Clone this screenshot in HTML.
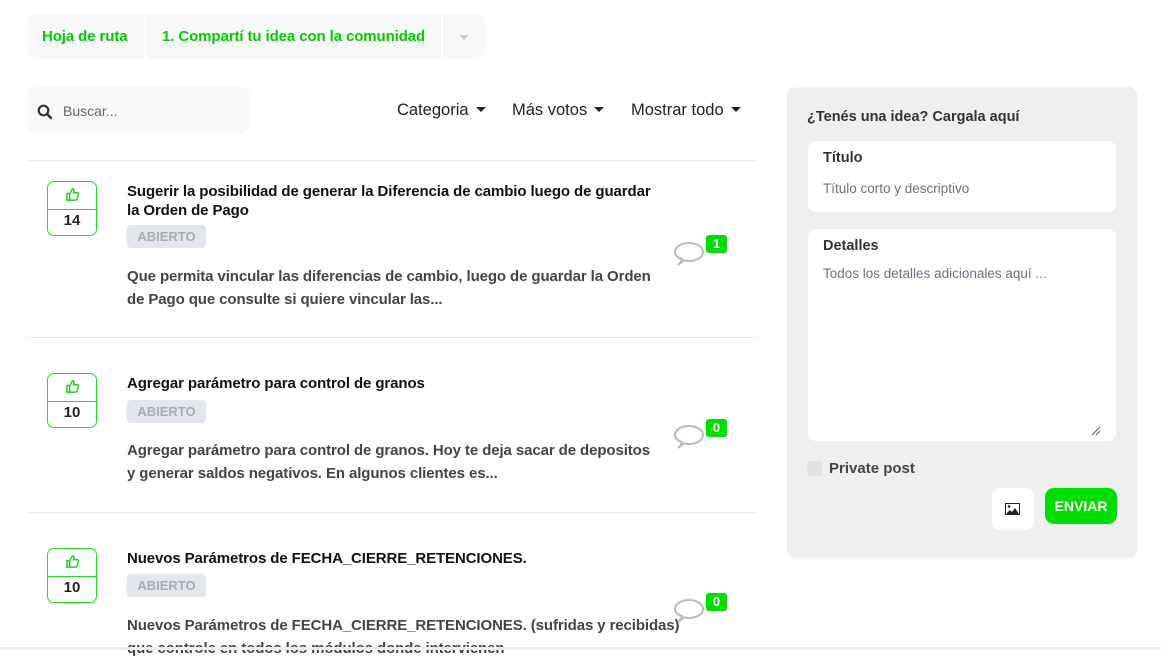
<!DOCTYPE html>
<html><head><meta charset="utf-8"><style>
*{box-sizing:border-box;margin:0;padding:0}
body{width:1161px;height:650px;overflow:hidden;background:#fff;font-family:"Liberation Sans",sans-serif;font-weight:bold;position:relative;color:#111}
.a{position:absolute;white-space:nowrap}
.tab{position:absolute;top:14px;height:45px;background:#f8f8f8;color:#0c0;font-size:15px;line-height:45px;letter-spacing:-0.1px}
.sep{position:absolute;left:27px;width:730px;height:1px;background:#e8e8e8}
.vote{position:absolute;left:47px;width:50px;height:55px;border:1px solid #2d2;border-radius:7px}
.vote .d{position:absolute;top:27px;left:0;right:0;height:1px;background:#2d2}
.vote .n{position:absolute;top:30px;width:100%;text-align:center;font-size:15px;color:#222}
.title{font-size:15px;letter-spacing:-0.1px;line-height:19px;color:#111}
.badge{position:absolute;left:127px;width:79px;height:23px;background:#e3e6ea;border-radius:4px;color:#a9adb2;font-size:13px;text-align:center;line-height:23px}
.desc{font-size:15px;letter-spacing:-0.1px;line-height:23px;color:#444}
.cnt{position:absolute;left:706px;width:21px;height:18px;background:#0d0;border-radius:3px;color:#fff;font-size:13px;text-align:center;line-height:18px}
.menu{font-size:16.5px;font-weight:normal;color:#222}
.caret{display:inline-block;width:0;height:0;border-left:5px solid transparent;border-right:5px solid transparent;border-top:5px solid #222;vertical-align:middle;margin-left:7px;margin-top:-3px}
</style></head><body>
<div class="tab" style="left:27px;width:117px;border-radius:10px 0 0 10px;padding-left:15px">Hoja de ruta</div>
<div class="tab" style="left:146px;width:295px;padding-left:16px">1. Compartí tu idea con la comunidad</div>
<div class="tab" style="left:443px;width:43px;border-radius:0 10px 10px 0"><span style="position:absolute;left:16px;top:21px;border-left:5px solid transparent;border-right:5px solid transparent;border-top:5px solid #ccc"></span></div>

<div class="a" style="left:27px;top:87px;width:223px;height:46px;background:#f8f8f8;border-radius:10px"></div>
<svg class="a" style="left:37px;top:104px" width="16" height="16" viewBox="0 0 16 16"><circle cx="6.5" cy="6.5" r="4.8" fill="none" stroke="#333" stroke-width="2.2"/><path d="M10 10l4 4" stroke="#333" stroke-width="2.6" stroke-linecap="round"/></svg>
<div class="a" style="left:63px;top:103px;font-size:14px;font-weight:normal;color:#666">Buscar...</div>
<div class="a menu" style="left:397px;top:101px">Categoria<span class="caret"></span></div>
<div class="a menu" style="left:512px;top:101px">Más votos<span class="caret"></span></div>
<div class="a menu" style="left:631px;top:101px">Mostrar todo<span class="caret"></span></div>

<div class="sep" style="top:160px"></div>
<div class="sep" style="top:337px"></div>
<div class="sep" style="top:512px"></div>

<div class="vote" style="top:181px"><svg class="a" style="left:17px;top:5px" width="15" height="15" viewBox="0 0 16 16"><path d="M2 7h3v7H2zM5 7l3-5c1.5 0 2 1 1.5 2.5L9 6h4c1 0 1.5 1 1.2 2l-1.5 5c-.3.7-.8 1-1.5 1H5" fill="none" stroke="#2c2" stroke-width="1.5"/></svg><div class="d"></div><div class="n">14</div></div>
<div class="a title" style="left:127px;top:182px">Sugerir la posibilidad de generar la Diferencia de cambio luego de guardar<br>la Orden de Pago</div>
<div class="badge" style="top:225px">ABIERTO</div>
<div class="a desc" style="left:127px;top:265px">Que permita vincular las diferencias de cambio, luego de guardar la Orden<br>de Pago que consulte si quiere vincular las...</div>
<svg class="a" style="left:673px;top:240px" width="32" height="28" viewBox="0 0 32 28"><path d="M9 19C4 17.5 2 15 2 12 2 7 8 3 16 3s14 4 14 9-6 9-14 9c-2 0-3.5-.2-5-.6L5 25c2-2 3.5-4 4-6z" fill="none" stroke="#b5bcc5" stroke-width="2"/></svg>
<div class="cnt" style="top:235px">1</div>

<div class="vote" style="top:373px"><svg class="a" style="left:17px;top:5px" width="15" height="15" viewBox="0 0 16 16"><path d="M2 7h3v7H2zM5 7l3-5c1.5 0 2 1 1.5 2.5L9 6h4c1 0 1.5 1 1.2 2l-1.5 5c-.3.7-.8 1-1.5 1H5" fill="none" stroke="#2c2" stroke-width="1.5"/></svg><div class="d"></div><div class="n">10</div></div>
<div class="a title" style="left:127px;top:374px">Agregar parámetro para control de granos</div>
<div class="badge" style="top:400px">ABIERTO</div>
<div class="a desc" style="left:127px;top:439px">Agregar parámetro para control de granos. Hoy te deja sacar de depositos<br>y generar saldos negativos. En algunos clientes es...</div>
<svg class="a" style="left:673px;top:423px" width="32" height="28" viewBox="0 0 32 28"><path d="M9 19C4 17.5 2 15 2 12 2 7 8 3 16 3s14 4 14 9-6 9-14 9c-2 0-3.5-.2-5-.6L5 25c2-2 3.5-4 4-6z" fill="none" stroke="#b5bcc5" stroke-width="2"/></svg>
<div class="cnt" style="top:419px">0</div>

<div class="vote" style="top:548px"><svg class="a" style="left:17px;top:5px" width="15" height="15" viewBox="0 0 16 16"><path d="M2 7h3v7H2zM5 7l3-5c1.5 0 2 1 1.5 2.5L9 6h4c1 0 1.5 1 1.2 2l-1.5 5c-.3.7-.8 1-1.5 1H5" fill="none" stroke="#2c2" stroke-width="1.5"/></svg><div class="d"></div><div class="n">10</div></div>
<div class="a title" style="left:127px;top:549px">Nuevos Parámetros de FECHA_CIERRE_RETENCIONES.</div>
<div class="badge" style="top:574px">ABIERTO</div>
<div class="a desc" style="left:127px;top:614px">Nuevos Parámetros de FECHA_CIERRE_RETENCIONES. (sufridas y recibidas)<br>que controle en todos los módulos donde intervienen</div>
<svg class="a" style="left:673px;top:597px" width="32" height="28" viewBox="0 0 32 28"><path d="M9 19C4 17.5 2 15 2 12 2 7 8 3 16 3s14 4 14 9-6 9-14 9c-2 0-3.5-.2-5-.6L5 25c2-2 3.5-4 4-6z" fill="none" stroke="#b5bcc5" stroke-width="2"/></svg>
<div class="cnt" style="top:593px">0</div>

<div class="a" style="left:787px;top:87px;width:350px;height:471px;background:#efefef;border-radius:8px"></div>
<div class="a" style="left:807px;top:109px;font-size:14.5px;color:#333">¿Tenés una idea? Cargala aquí</div>
<div class="a" style="left:808px;top:141px;width:308px;height:71px;background:#fff;border-radius:8px"></div>
<div class="a" style="left:823px;top:150px;font-size:14.5px;color:#333">Título</div>
<div class="a" style="left:823px;top:181px;font-size:13.5px;font-weight:normal;color:#6b7280">Título corto y descriptivo</div>
<div class="a" style="left:808px;top:229px;width:308px;height:212px;background:#fff;border-radius:8px"></div>
<div class="a" style="left:823px;top:238px;font-size:14.5px;color:#333">Detalles</div>
<div class="a" style="left:823px;top:266px;font-size:13.5px;font-weight:normal;color:#6b7280">Todos los detalles adicionales aquí ...</div>
<svg class="a" style="left:1091px;top:426px" width="10" height="10"><path d="M1 9L9 1M5 9L9 5" stroke="#555" stroke-width="1"/></svg>
<div class="a" style="left:807px;top:461px;width:15px;height:15px;background:#dfe3e8;border-radius:3px"></div>
<div class="a" style="left:829px;top:460px;font-size:15px;color:#444">Private post</div>
<div class="a" style="left:992px;top:488px;width:42px;height:42px;background:#fff;border-radius:8px"></div>
<svg class="a" style="left:1005px;top:503px" width="15" height="12" viewBox="0 0 15 12"><rect x=".5" y=".5" width="14" height="11" fill="#fff" stroke="#222"/><circle cx="4" cy="3.5" r="1.3" fill="#222"/><path d="M1 11l4-4 2 2 3-4 4 6z" fill="#222"/></svg>
<div class="a" style="left:1045px;top:488px;width:72px;height:36px;background:#00dd00;border-radius:9px;color:#fff;font-size:14px;text-align:center;line-height:37px">ENVIAR</div>
<div class="a" style="left:0;top:647px;width:1161px;height:3px;background:#e6eef7"></div>
</body></html>
